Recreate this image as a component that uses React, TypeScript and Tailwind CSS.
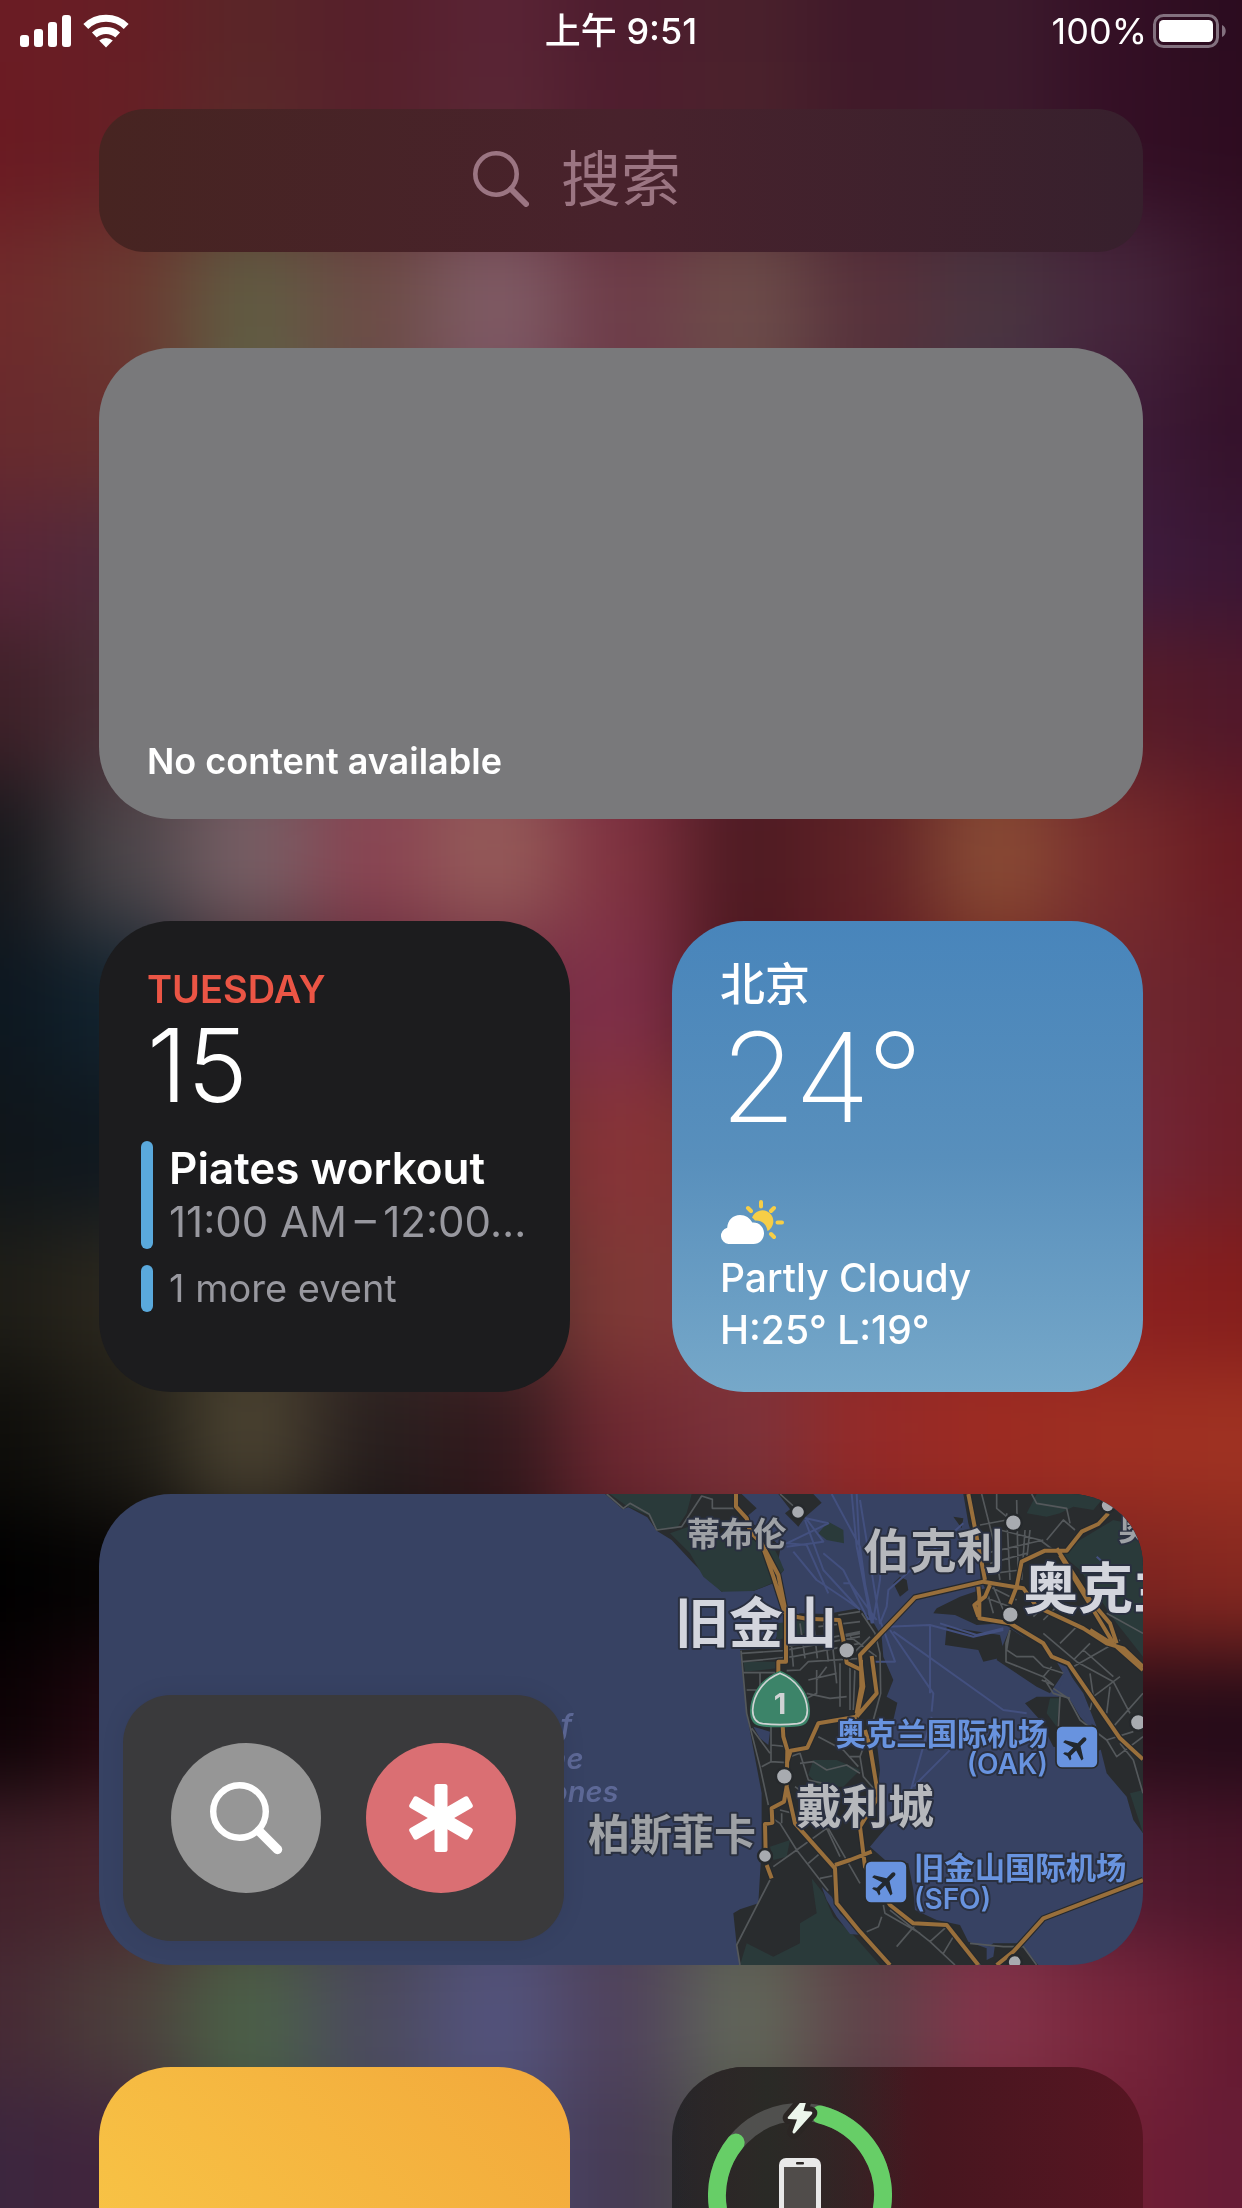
import type { ReactNode } from "react";

const columnCenters = [0, 124, 248, 372, 497, 621, 745, 869, 994, 1118, 1242];

const wallpaperRows: { y: number; colors: string[] }[] = [
  { y: 30, colors: ["#6b1c24", "#661e25", "#5a2628", "#561f2b", "#5a2435", "#4d1c2e", "#4a212c", "#3f1829", "#3d1b2d", "#340f25", "#2b0c1f"] },
  { y: 150, colors: ["#6a1a22", "#662025", "#5a2a2a", "#56212b", "#5a2835", "#501e2e", "#4c232c", "#401a29", "#3d1b2d", "#340f25", "#2e0c20"] },
  { y: 290, colors: ["#702a2b", "#6a3830", "#605c42", "#6c4c46", "#805c66", "#6e3c48", "#6d4d4a", "#57313b", "#4a3540", "#46263c", "#38132a"] },
  { y: 440, colors: ["#682a2d", "#68302f", "#606045", "#6a4a48", "#785060", "#6a3a48", "#6a4a48", "#54303a", "#483448", "#3e1c38", "#34112a"] },
  { y: 560, colors: ["#582538", "#502c3c", "#504040", "#604048", "#704858", "#603048", "#604040", "#503038", "#503048", "#3e1c3e", "#3a1634"] },
  { y: 700, colors: ["#3e2028", "#4a3038", "#604850", "#744450", "#804850", "#702840", "#501c28", "#582024", "#703428", "#581c28", "#50182a"] },
  { y: 860, colors: ["#16171b", "#4c464a", "#786066", "#8a4452", "#965c5a", "#803240", "#4e1a22", "#602226", "#8a4c36", "#782c2c", "#691a22"] },
  { y: 1000, colors: ["#0d1720", "#122430", "#402830", "#602838", "#702c40", "#80304a", "#4c161e", "#601c24", "#702820", "#702830", "#68202a"] },
  { y: 1150, colors: ["#10161a", "#101820", "#282420", "#402828", "#603030", "#8a3438", "#74302c", "#701c20", "#701c20", "#74283a", "#6e1e28"] },
  { y: 1300, colors: ["#1e1d17", "#2c281e", "#403828", "#382c28", "#4c2c2c", "#813a36", "#80343a", "#8c2828", "#942424", "#8a2020", "#841e1c"] },
  { y: 1440, colors: ["#0e0d0a", "#1e1c16", "#4c4432", "#281f1e", "#32191d", "#6e2831", "#7c323a", "#952a28", "#9d2c22", "#a03022", "#a03222"] },
  { y: 1580, colors: ["#000000", "#060404", "#181412", "#141010", "#241014", "#501c24", "#602428", "#782020", "#802020", "#7e2420", "#862820"] },
  { y: 1720, colors: ["#0c0205", "#240810", "#301418", "#281820", "#302030", "#402030", "#482028", "#501820", "#481420", "#260c18", "#240b18"] },
  { y: 1870, colors: ["#42202a", "#4a242c", "#443c34", "#3c3c48", "#484868", "#483c50", "#505048", "#503438", "#6c283c", "#501a30", "#481428"] },
  { y: 2015, colors: ["#472a34", "#4c403c", "#4c6248", "#4c4a5e", "#54547e", "#50425c", "#62685a", "#60434a", "#84344a", "#78263c", "#651a30"] },
  { y: 2160, colors: ["#3c263e", "#42243c", "#405040", "#444858", "#4c4c70", "#463a54", "#505448", "#50343c", "#702838", "#701e34", "#661c36"] },
];

function Wallpaper() {
  const last = columnCenters.length - 1;
  const cells = wallpaperRows.flatMap((row, r) => {
    const prev = wallpaperRows[r - 1];
    const next = wallpaperRows[r + 1];
    const top = prev ? (prev.y + row.y) / 2 : -300;
    const bottom = next ? (next.y + row.y) / 2 : 2600;
    return row.colors.map((fill, c) => {
      const left = c === 0 ? -300 : (columnCenters[c - 1] + columnCenters[c]) / 2;
      const right = c === last ? 1560 : (columnCenters[c + 1] + columnCenters[c]) / 2;
      return <rect key={`${r}-${c}`} x={left} y={top} width={right - left + 1} height={bottom - top + 1} fill={fill} />;
    });
  });
  return (
    <svg className="pointer-events-none fixed inset-0 -z-10 h-full w-full" viewBox="0 0 1242 2208" preserveAspectRatio="none" aria-hidden="true">
      <defs>
        <filter id="soften" filterUnits="userSpaceOnUse" x="-300" y="-300" width="1860" height="2900" colorInterpolationFilters="sRGB">
          <feGaussianBlur stdDeviation="42" />
        </filter>
      </defs>
      <g filter="url(#soften)">{cells}</g>
    </svg>
  );
}

function StatusBar() {
  return (
    <header className="grid h-[61px] shrink-0 grid-cols-3 items-center px-5 text-4xl text-white">
      <div className="flex items-center gap-3">
        <svg className="h-8 w-[51px]" viewBox="0 0 51 32" fill="currentColor" aria-label="信号">
          <rect x="0" y="20" width="9" height="12" rx="3" />
          <rect x="14" y="14" width="9" height="18" rx="3" />
          <rect x="28" y="7" width="9" height="25" rx="3" />
          <rect x="42" y="0" width="9" height="32" rx="3" />
        </svg>
        <svg className="h-[34px] w-[46px]" viewBox="0 0 46 34" fill="none" stroke="currentColor" aria-label="Wi-Fi">
          <path d="M2.8 12.4a29 29 0 0 1 40.4 0" strokeWidth="7" />
          <path d="M11.3 21a17.5 17.5 0 0 1 23.4 0" strokeWidth="7" />
          <path d="M16.2 26.6a10 10 0 0 1 13.6 0L23 33.5z" fill="currentColor" stroke="none" />
        </svg>
      </div>
      <time className="text-center font-medium whitespace-nowrap">上午 9:51</time>
      <div className="-mr-1 flex items-center justify-end gap-1.5">
        <span>100%</span>
        <svg className="h-[34px] w-[73px]" viewBox="0 0 73 34" aria-label="电池">
          <rect x="1.5" y="1.5" width="63" height="31" rx="9" fill="none" stroke="#83717f" strokeWidth="3" />
          <rect x="6" y="6" width="54" height="22" rx="4.5" fill="#fff" />
          <path d="M69 11c5 2 5 10 0 12z" fill="#83717f" />
        </svg>
      </div>
    </header>
  );
}

function SearchField() {
  return (
    <label className="flex h-[143px] items-center justify-center gap-8 rounded-[46px] bg-linear-to-r from-[#472421] via-[#48222c] to-[#37202d] pb-1 text-[#9b7582]">
      <svg className="h-14 w-14 shrink-0" viewBox="0 0 56 56" fill="none" stroke="currentColor" strokeLinecap="round" aria-hidden="true">
        <circle cx="23" cy="23" r="20.7" strokeWidth="4.6" />
        <path d="M38 38 53 53" strokeWidth="6" />
      </svg>
      <input type="search" aria-label="搜索" placeholder="搜索" className="w-52 bg-transparent text-6xl text-white outline-none placeholder:text-[#9b7582]" />
    </label>
  );
}

function Card({ className, children }: { className: string; children?: ReactNode }) {
  return <section className={`relative min-h-[471px] overflow-hidden rounded-[72px] ${className}`}>{children}</section>;
}

function CalendarCard() {
  return (
    <Card className="bg-[#1c1c1e] py-10 pr-10 pl-[42px]">
      <h2 className="pl-1.5 text-[38px] leading-[56px] font-semibold text-[#eb5545]">TUESDAY</h2>
      <p className="pl-1.5 text-[102px] leading-[96px] font-light text-white">15</p>
      <div className="mt-7 flex gap-4">
        <span className="w-3 shrink-0 rounded-full bg-[#5aa9dc]" />
        <div className="min-w-0 leading-[54px] whitespace-nowrap">
          <p className="truncate text-[44px] font-semibold text-white">Piates workout</p>
          <p className="text-[42px] text-[#98989f]">11:00 AM{"\u2009"}–{"\u2009"}12:00…</p>
        </div>
      </div>
      <div className="mt-4 flex gap-4">
        <span className="w-3 shrink-0 rounded-full bg-[#5aa9dc]" />
        <p className="text-[38px] leading-[47px] text-[#98989f]">1 more event</p>
      </div>
    </Card>
  );
}

function WeatherCard() {
  return (
    <Card className="flex flex-col bg-linear-to-b from-[#4885bb] via-[#588fbc] to-[#76a8c9] px-12 pt-[34px] pb-9 text-white">
      <h2 className="text-[45px] leading-[60px] font-medium">北京</h2>
      <p className="text-[124px] leading-[124px] font-extralight">24°</p>
      <svg className="mt-auto mb-2 h-11 w-16" viewBox="0 0 64 44" aria-hidden="true">
        <g stroke="#f7ce46" strokeWidth="4" strokeLinecap="round">
          <path d="M41 2v4.5M54 8l-3 3M57.500 22.500h4.500M54 37l-3-3M28 8l3 3" />
        </g>
        <path d="M32 17.500a11 11 0 1 1 15.500 13.500c-1-7-6-11-12.500-10.500-1-1.500-2-2.500-3-3z" fill="#f7ce46" />
        <path d="M8.500 44a8.300 8.300 0 0 1-1.300-16.300C7.700 20 13 15 20 15c5.500 0 10 3 12.300 7.500C39 22 44 27 44 33.300 44 39.500 39.500 44 33.500 44z" fill="#fff" />
      </svg>
      <p className="text-[39px] leading-[52px] font-medium">Partly Cloudy</p>
      <p className="text-[39px] leading-[52px] font-medium">H:25° L:19°</p>
    </Card>
  );
}

function Airport({ x, y }: { x: number; y: number }) {
  return (
    <g transform={`translate(${x} ${y})`}>
      <rect width="126" height="126" rx="18" fill="#6893df" stroke="#292b2c" strokeWidth="5" />
      <path
        transform="translate(62 66) rotate(45) scale(4.1) translate(-12 -12)"
        d="M21 16v-2l-8-5V3.500c0-.83-.67-1.500-1.500-1.500S10 2.670 10 3.500V9l-8 5v2l8-2.500V19l-2 1.500V22l3.500-1 3.500 1v-1.500L13 19v-5.500l8 2.500z"
        fill="#22282f"
      />
    </g>
  );
}

const stops = [
  [714, 96, 18],
  [860, 511, 22],
  [673, 889, 22],
  [615, 1128, 18],
  [1360, 128, 22],
  [1351, 404, 22],
  [1643, 76, 18],
  [1735, 727, 22],
  [1364, 1446, 18],
];

const places: { x: number; y: number; size: number; fill: string; text: string; anchor?: "end" }[] = [
  { x: 380, y: 198, size: 100, fill: "#9ea1a5", text: "蒂布伦" },
  { x: 345, y: 490, size: 162, fill: "#d3d5dd", text: "旧金山" },
  { x: 84, y: 1110, size: 126, fill: "#9ea1a5", text: "柏斯菲卡" },
  { x: 910, y: 264, size: 140, fill: "#b6b8bc", text: "伯克利" },
  { x: 708, y: 1028, size: 138, fill: "#b6b8bc", text: "戴利城" },
  { x: 1390, y: 384, size: 165, fill: "#d3d5dd", text: "奥克兰" },
  { x: 1675, y: 180, size: 100, fill: "#9ea1a5", text: "奥林达" },
  { x: 1464, y: 794, size: 91, fill: "#6893df", text: "奥克兰国际机场", anchor: "end" },
  { x: 1464, y: 882, size: 84, fill: "#6893df", text: "(OAK)", anchor: "end" },
  { x: 1062, y: 1198, size: 91, fill: "#6893df", text: "旧金山国际机场" },
  { x: 1062, y: 1288, size: 84, fill: "#6893df", text: "(SFO)" },
];

const highways =
  "M528 42V80L560 115 570 155 605 190 655 285 678 400V545H655V600M605 190 640 290 675 400M678 405 740 416 838 420 850 480 860 548 900 568M668 735 670 770 682 810 680 920M680 850 692 812 742 803 775 730 890 710" +
  "M680 920 672 965 635 985 637 1028 615 1032 617 1120M620 1155 635 1195M680 920 705 1030 825 1165 830 1270 900 1355 990 1455M825 1155 870 1140 935 1115" +
  "M890 710 910 620 900 525 1065 352 1270 305 1310 312 1390 325 1430 380 1570 445 1640 490 1690 505 1749 560M935 528 950 640 890 710M903 540 904 620 890 700M915 750 930 800 955 950 900 1040 915 1160 990 1275 1060 1330 1160 1335 1255 1455" +
  "M1225 42 1275 300M1255 320 1258 350 1258 415 1350 430 1450 490 1475 530 1525 550 1680 775 1749 838M1290 315 1275 350 1243 375 1255 410M1350 372 1370 320 1385 245 1455 212 1520 212 1565 155 1615 132 1645 100M1490 205 1590 360 1650 430 1670 490M1500 225 1600 390 1660 490M1590 450 1670 500 1749 570M1749 1200 1450 1315 1360 1415 1310 1455";

const streets =
  "M140 42 190 85 210 70 268 103 290 150 365 140 425 48 457 58V85H525M660 42 700 78M543 512 560 700 600 860 625 975M545 520 670 512 900 470M548 545 700 530 900 490M680 500 900 455M548 578H655M680 572 720 570 745 545 900 535" +
  "M600 578V640M560 630H590M690 440 700 560M720 430 735 535M760 425 772 535M790 420 805 545M815 470 830 610M775 440 900 425M835 405 900 395M850 470 900 460M770 570V640L720 665M800 560 770 600M840 550V680M870 560V690M885 560 880 690M740 640 810 655 860 650M745 600 830 580" +
  "M605 860 633 845 680 848M575 745 630 820M633 740V845M635 795 680 800M720 850 760 845 800 870 860 855 900 880M775 770 850 810 895 860M690 830 720 820 745 900 790 910M705 920 760 960 790 1020M630 1010 660 1030 710 1110 805 1232M660 990 700 1000M665 1000V1030M640 1160 710 1110 800 1045 840 1130M745 1150 780 1120M805 1045 900 1210M780 1195 830 1185M630 1200 530 1395 540 1455" +
  "M905 400 945 460 960 520 962 640 940 720 900 830 910 890 945 930M870 470 950 530M880 520 930 470M870 830 900 830M990 1290 1110 1385 1185 1455M970 1275 975 1300 1080 1360M920 1355 955 1340 965 1310M1010 1400 1070 1330M1110 1385 1160 1340M1150 1420 1180 1370" +
  "M1265 42 1300 180 1320 300M1310 42V85L1340 110M1260 135 1340 120M1275 220 1450 180M1290 250 1400 220M1300 280 1380 270M1340 100 1350 300M1370 60 1375 300M1395 150 1385 300M1410 150 1400 240M1320 150 1440 180 1480 210M1280 330 1300 400M1300 320 1330 390M1270 350 1350 380M1290 320 1370 360M1460 180 1510 120 1545 150M1415 42 1430 70 1520 85 1530 130" +
  "M1350 450 1338 490V545L1450 590 1480 615 1445 600M1350 450 1340 510 1370 530 1420 530 1450 560 1510 580M1450 590 1475 560M1480 625 1525 655 1560 720 1640 780 1720 755M1450 460 1550 545 1660 605 1710 700M1450 420 1490 380M1420 410 1450 380M1500 490 1560 430M1540 540 1590 490M1540 560 1680 480M1590 580 1600 650 1680 590M1600 650 1590 690M1640 700 1650 620M1660 740 1749 640M1570 510 1660 590M1640 780 1670 830 1749 770M1680 790 1720 840 1749 940M1500 650 1495 740M1640 400 1749 460M1455 600 1480 640 1530 655" +
  "M1230 1390 1330 1400 1390 1400 1430 1455M1215 1400 1260 1455";

const ferries =
  "M680 200 790 185 738 115 805 130 680 190 740 195 805 340M700 215 770 300 860 360 895 385M735 120 790 270 900 390M790 220 850 270 925 420M815 42 900 200 930 420M875 42 890 200 935 430M890 42 900 240 940 430M850 310 870 310 950 420M900 60 960 430 980 380 985 330 1210 130M965 200 960 300 940 420" +
  "M960 420 1005 545 945 545M980 440 1110 435 1240 470 1330 450M990 450 1120 640 1115 695M1110 435V640M1000 455 1330 690 1400 700M1115 710 1050 940M1180 800 1060 920M1140 430 1250 465 1330 445M1610 230 1690 300";

function MapCard() {
  return (
    <Card className="flex items-end bg-[#374263] p-6">
      <svg className="absolute inset-0 h-full w-full" viewBox="-1383 42 3132 1413" preserveAspectRatio="xMaxYMid slice" role="img" aria-label="地图">
        <g fill="#292c2e">
          <path d="M135 42 188 88 205 82 262 112 290 152 335 180 400 250 440 290 485 335 520 318 580 333 640 310 672 270 655 240 662 200 640 180 612 165 560 110 590 85 545 42z" />
          <path d="M655 42 690 88 675 100 715 140 735 112 785 68 760 42z" />
          <path d="M775 160 805 125 850 150 852 190 800 180z" fill="#2a3a3a" />
          <path d="M540 510 630 505 680 420 720 400 800 402 895 385 930 410 965 470 970 530 1000 600 980 650 1012 668 1000 720 945 760 952 800 960 870 950 950 990 1030 955 1070 930 1100 975 1140 1045 1150 1060 1230 1065 1290 1130 1320 1200 1335 1225 1385 1280 1405 1300 1390 1380 1390 1435 1455H540L530 1395 520 1300 540 1288 595 1270 605 1100 605 940 575 780 560 700z" />
          <path d="M1210 42 1225 130 1255 225 1262 300 1275 325 1200 350 1130 385 1120 400 1185 405 1250 435 1330 430 1390 470 1450 530 1520 560 1560 640 1590 720 1620 800 1640 880 1700 950 1720 1020 1749 1060V42z" />
          <path d="M1160 440 1320 465 1335 530 1270 545 1255 510 1155 495zM1350 445 1420 490 1475 520 1510 580 1470 640 1430 620 1340 560 1310 540zM1395 670 1430 650H1525L1560 710 1640 800 1600 820 1480 800 1440 720zM1000 310 1020 290 1040 300 1045 330 1020 350zM1180 110 1210 115 1205 145z" />
        </g>
        <g fill="#2a3a3a">
          <path d="M150 42H395L380 100 350 145 290 150 265 105 200 78zM330 160 400 135 500 180 600 180 640 200 660 240 672 270 635 310 580 333 485 335 430 290 390 220zM650 430 740 420 735 460 650 480zM550 545H650V565L555 575z" />
          <path d="M760 840 830 840 900 870 850 920 780 920 745 885zM755 1195 790 1240 820 1310 880 1365 960 1455H540L560 1390 640 1430 720 1390V1330L770 1300zM630 1100 690 1080 680 1130 640 1140z" />
          <path d="M1430 42H1640L1600 90 1540 80 1500 100 1460 110 1400 100zM1660 120 1749 140V530L1670 430 1560 270 1500 220 1560 180zM1470 655H1500L1490 740 1460 700zM1710 940 1749 930V1060z" />
        </g>
        <path d="M785 1220 815 1250 840 1300 870 1325 905 1365 870 1362 830 1310 800 1260zM580 740 630 755 625 795 600 775zM1280 1400 1305 1395 1300 1430 1280 1440zM1520 570 1570 640 1610 740 1590 730 1530 660 1490 640z" fill="#374263" />
        <path d={ferries} fill="none" stroke="#43507f" strokeWidth="6" strokeLinejoin="round" />
        <path d={streets} fill="none" stroke="#54585b" strokeWidth="5" strokeLinejoin="round" />
        <path d={highways} fill="none" stroke="#26292c" strokeWidth="19" strokeLinejoin="round" />
        <path d={highways} fill="none" stroke="#996f3b" strokeWidth="12" strokeLinejoin="round" />
        {stops.map(([cx, cy, r]) => (
          <circle key={cx} cx={cx} cy={cy} r={r + 3} fill="#a8abb0" stroke="#26292c" strokeWidth="7" />
        ))}
        <g>
          <path d="M660 572c52 20 88 66 90 120 0 30-12 44-34 47-35 4-77 4-112 0-22-3-34-17-34-47 2-54 38-100 90-120z" fill="#3c8469" />
          <path d="M660 580c46 18 80 60 82 110 0 26-10 38-30 41-34 4-70 4-104 0-20-3-30-15-30-41 2-50 36-92 82-110z" fill="none" stroke="#d0d3d4" strokeWidth="5" />
          <text x="660" y="702" fontSize="87" fontWeight="700" textAnchor="middle" fill="#d0d3d4">1</text>
        </g>
        <Airport x={1488} y={738} />
        <Airport x={915} y={1143} />
        <g fontWeight="600" stroke="#2a3040" strokeWidth="12" strokeLinejoin="round" className="[paint-order:stroke]">
          {places.map((p) => (
            <text key={p.text} x={p.x} y={p.y} fontSize={p.size} fill={p.fill} textAnchor={p.anchor}>
              {p.text}
            </text>
          ))}
        </g>
        <g fontSize="87" fontWeight="600" fontStyle="italic" textAnchor="end" fill="#5d6896">
          <text x="36" y="765">of</text>
          <text x="70" y="866">the</text>
          <text x="175" y="966">Farallones</text>
        </g>
      </svg>
      <div className="relative flex gap-[45px] rounded-[48px] bg-[#3a3a3c] p-12 shadow-[0_0_24px_rgba(0,0,0,0.08)]">
        <button type="button" aria-label="搜索" className="flex size-[150px] items-center justify-center rounded-full bg-[#969696] text-white">
          <svg className="size-[74px]" viewBox="0 0 74 74" fill="none" stroke="currentColor" strokeLinecap="round" aria-hidden="true">
            <circle cx="30.500" cy="30.500" r="26.300" strokeWidth="6.400" />
            <path d="m50 50 18.500 18.500" strokeWidth="9.500" />
          </svg>
        </button>
        <button type="button" aria-label="更多" className="flex size-[150px] items-center justify-center rounded-full bg-[#da6f73] text-white">
          <svg className="size-[68px]" viewBox="-34 -34 68 68" fill="currentColor" aria-hidden="true">
            <rect x="-6.500" y="-34" width="13" height="68" rx="2.500" />
            <rect x="-6.500" y="-34" width="13" height="68" rx="2.500" transform="rotate(60)" />
            <rect x="-6.500" y="-34" width="13" height="68" rx="2.500" transform="rotate(-60)" />
          </svg>
        </button>
      </div>
    </Card>
  );
}

function BatteryCard() {
  return (
    <Card className="bg-linear-to-r from-[#26262a] via-[#47161f] via-55% to-[#571522] p-9">
      <div className="absolute inset-0 bg-linear-to-r from-transparent via-[#2a2a26] via-20% to-transparent to-50%" />
      <svg className="relative size-[184px]" viewBox="0 0 184 184" role="img" aria-label="iPhone 电量">
        <circle cx="92" cy="92" r="83" fill="none" stroke="#50504e" strokeWidth="18" />
        <circle cx="92" cy="92" r="83" fill="none" stroke="#67ce67" strokeWidth="18" strokeLinecap="round" pathLength="100" strokeDasharray="82 100" transform="rotate(-76 92 92)" />
        <path d="M96-5 80 14q-1 2 1 2l8 .5-4.500 12q0 3 2.500 1.500l17-19q1-2-1-2.500l-7.500-.5 3.500-12q0-3-3-1z" fill="#2b2624" stroke="#2b2624" strokeWidth="10" strokeLinejoin="round" />
        <path d="M96-5 80 14q-1 2 1 2l8 .5-4.500 12q0 3 2.500 1.500l17-19q1-2-1-2.500l-7.500-.5 3.500-12q0-3-3-1z" fill="#ecf6ec" />
        <rect x="71" y="55" width="42" height="84" rx="7" fill="#e8e8e8" />
        <rect x="76" y="64" width="32" height="64" fill="#504c4a" />
        <rect x="88" y="59" width="8" height="2.500" rx="1" fill="#2b2624" />
      </svg>
    </Card>
  );
}

export default function App() {
  return (
    <div
      lang="zh-CN"
      className="relative isolate flex h-screen flex-col overflow-hidden bg-[#4a1a28] font-['Inter','Noto_Sans_CJK_SC',sans-serif]"
    >
      <Wallpaper />
      <StatusBar />
      <main className="min-h-0 flex-1 overflow-y-auto px-[99px] pt-12 [scrollbar-width:none]">
        <SearchField />
        <div className="mt-24 grid grid-cols-2 gap-[102px]">
          <div className="col-span-2">
            <Card className="flex items-end bg-[#79797b] px-12 pb-[33px]">
              <p className="text-[36px] leading-[50px] font-semibold text-white">No content available</p>
            </Card>
          </div>
          <CalendarCard />
          <WeatherCard />
          <div className="col-span-2">
            <MapCard />
          </div>
          <Card className="bg-linear-to-bl from-[#f2a83b] to-[#fad04a]" />
          <BatteryCard />
        </div>
      </main>
    </div>
  );
}
